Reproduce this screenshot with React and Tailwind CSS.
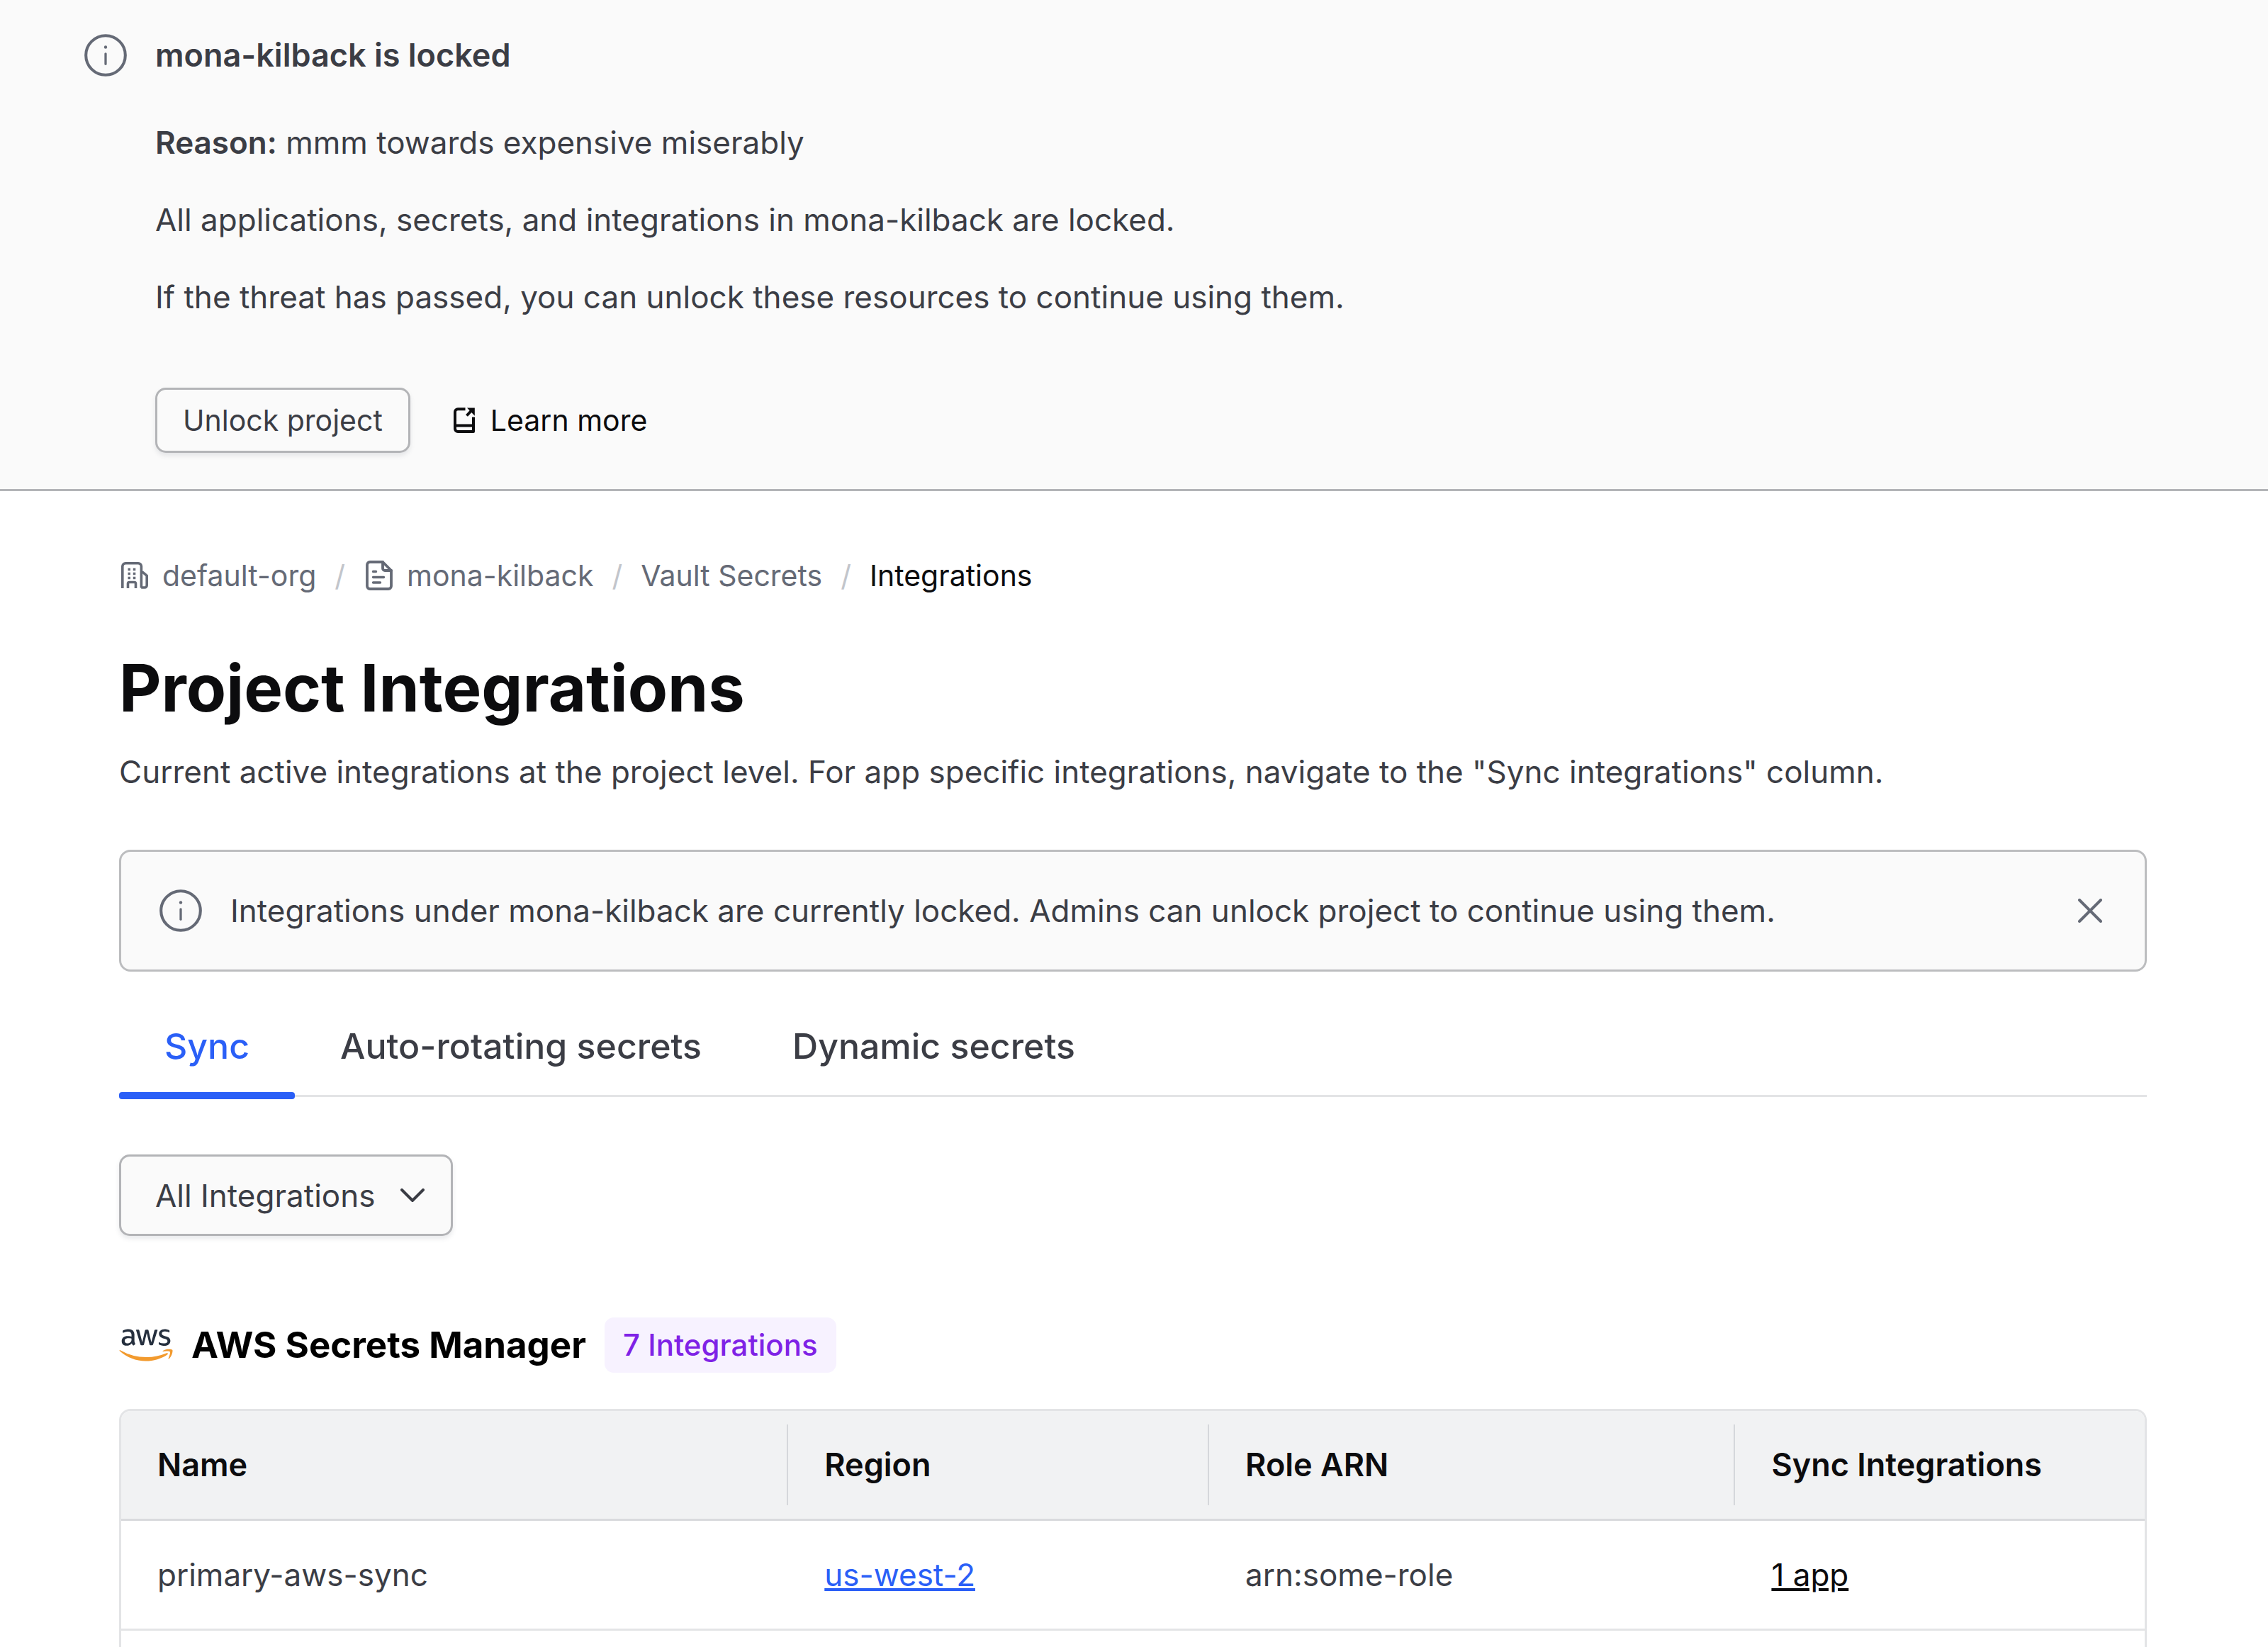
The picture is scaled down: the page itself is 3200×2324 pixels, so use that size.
import React from "react";
import { FaAws } from "react-icons/fa";

const tabs = ["Sync", "Auto-rotating secrets", "Dynamic secrets"];

const columns = [
  { label: "Name", width: "w-[32.9%]" },
  { label: "Region", width: "w-[20.8%]" },
  { label: "Role ARN", width: "w-[26%]" },
  { label: "Sync Integrations", width: "w-[20.3%]" },
];

function InfoIcon() {
  return (
    <svg viewBox="0 0 22 22" className="size-[60px] shrink-0 text-[#656a76]" fill="none" stroke="currentColor" aria-hidden="true">
      <circle cx="11" cy="11" r="10.2" strokeWidth="1.5" />
      <path d="M11 10.2v5.3" strokeWidth="1.2" strokeLinecap="round" />
      <circle cx="11" cy="6.8" r=".8" fill="currentColor" stroke="none" />
    </svg>
  );
}

function DocsLinkIcon() {
  return (
    <svg viewBox="0 0 30 36" className="h-9 w-[30px] shrink-0" fill="none" stroke="currentColor" strokeWidth="4" aria-hidden="true">
      <path d="M16.5 2.2H6A4 4 0 0 0 2 6.200V30a4 4 0 0 0 4 4h22V13.500" strokeLinejoin="round" />
      <path d="M2 25.500h26" />
      <path d="M18.500 11.500 25 4.500" />
      <path d="M19 .4h10.800v11.400Z" fill="currentColor" stroke="none" />
    </svg>
  );
}

function OrgIcon() {
  return (
    <span className="flex w-[43px] shrink-0 justify-center">
      <svg viewBox="0 0 38 38" className="size-[38px]" fill="none" stroke="currentColor" strokeWidth="3.600" aria-hidden="true">
        <path d="M1.800 37V6a4.400 4.400 0 0 1 4.300-4.200h18A4.400 4.400 0 0 1 28.400 6v30.400" />
        <path d="M9.500 37v-6.500a2 2 0 0 1 2-2h7a2 2 0 0 1 2 2V37" />
        <path d="M28.400 14.500h2.200l5.600 4.800V33a3 3 0 0 1-3 3h-5" strokeLinejoin="round" />
        <path d="M9.500 10.500h3.500M16.800 10.500h3.500M9.500 16.500h3.500M16.800 16.500h3.500M9.500 22.500h3.500M16.800 22.500h3.500" />
      </svg>
    </span>
  );
}

function ProjectIcon() {
  return (
    <span className="flex w-[43px] shrink-0 justify-center">
      <svg viewBox="0 0 38 42" className="h-[42px] w-[38px]" fill="none" stroke="currentColor" strokeWidth="3.800" strokeLinecap="round" strokeLinejoin="round" aria-hidden="true">
        <path d="M24 2H6a4 4 0 0 0-4 4v30a4 4 0 0 0 4 4h26a4 4 0 0 0 4-4V14L24 2Z" />
        <path d="M24 2v9a3 3 0 0 0 3 3h9" />
        <path d="M10.500 15.500h4M10.500 23.500h15M10.500 31h10" strokeWidth="3.400" />
      </svg>
    </span>
  );
}

function Separator() {
  return <span aria-hidden="true" className="text-[#c2c5cb]">/</span>;
}

function AwsLogo() {
  return (
    <>
      <svg width="0" height="0" className="absolute" aria-hidden="true">
        <linearGradient id="aws-fill" x1="0" y1="0" x2="0" y2="1">
          <stop offset="0.58" stopColor="#252f3e" />
          <stop offset="0.58" stopColor="#f29a2e" />
        </linearGradient>
      </svg>
      <FaAws fill="url(#aws-fill)" className="h-[60px] w-[76px] shrink-0" aria-hidden="true" />
    </>
  );
}

export default function App() {
  return (
    <div className="flex min-h-screen flex-col bg-white font-['Inter','Liberation_Sans',sans-serif] text-[44px] leading-[60px] text-[#3b3d45]">
      <section className="flex gap-10 border-b-[3px] border-[#b3b4b7] bg-[#fafafa] pt-12 pr-[120px] pb-[51px] pl-[119px]">
        <InfoIcon />
        <div>
          <h2 className="text-[45px] font-semibold">mona-kilback is locked</h2>
          <div className="mt-[63px] flex flex-col gap-[49px]">
            <p><strong className="font-semibold">Reason:</strong> mmm towards expensive miserably</p>
            <p>All applications, secrets, and integrations in mona-kilback are locked.</p>
            <p>If the threat has passed, you can unlock these resources to continue using them.</p>
          </div>
          <div className="mt-[98px] flex items-center gap-[61px] text-[41px]">
            <button type="button" className="h-[92px] rounded-[15px] border-[3px] border-[#b3b4b7] bg-[#fafafa] px-9 shadow-[0_4px_6px_rgba(101,106,118,0.14)]">Unlock project</button>
            <a href="#learn" className="flex items-center gap-[22px] text-[#0c0c0e]">
              <DocsLinkIcon />
              Learn more
            </a>
          </div>
        </div>
      </section>

      <main className="flex flex-1 flex-col pt-[89px] pr-[171px] pl-[168px]">
        <nav aria-label="Breadcrumb" className="flex items-center gap-[26px] text-[41px] text-[#656a76]">
          <a href="#org" className="flex items-center gap-[18px]"><OrgIcon />default-org</a>
          <Separator />
          <a href="#project" className="flex items-center gap-[18px]"><ProjectIcon />mona-kilback</a>
          <Separator />
          <a href="#vault">Vault Secrets</a>
          <Separator />
          <span aria-current="page" className="text-[#0c0c0e]">Integrations</span>
        </nav>

        <h1 className="mt-[69px] text-[92px] leading-[120px] font-bold text-[#0c0c0e]">Project Integrations</h1>
        <p className="mt-7">Current active integrations at the project level. For app specific integrations, navigate to the "Sync integrations" column.</p>

        <div role="status" className="mt-[80px] flex h-[172px] items-center gap-10 rounded-[16px] border-[3px] border-[#bcbdbf] bg-[#fafafa] pr-[60px] pl-[54px]">
          <InfoIcon />
          <p className="flex-1">Integrations under mona-kilback are currently locked. Admins can unlock project to continue using them.</p>
          <button type="button" aria-label="Dismiss" className="text-[#656a76]">
            <svg viewBox="0 0 34 34" className="size-[34px]" fill="none" stroke="currentColor" strokeWidth="4" strokeLinecap="round" aria-hidden="true">
              <path d="m2 2 30 30M32 2 2 32" />
            </svg>
          </button>
        </div>

        <div role="tablist" className="flex border-b-[3px] border-[#e3e4e6] text-[50px] font-medium">
          {tabs.map((tab, i) => (
            <button
              key={tab}
              type="button"
              role="tab"
              aria-selected={i === 0}
              className={i === 0 ? "relative px-16 pt-[75px] pb-[39px] text-[#2a5ff7]" : "px-16 pt-[75px] pb-[39px]"}
            >
              {tab}
              {i === 0 && <span className="absolute inset-x-0 -bottom-[6px] h-[10px] rounded-[4px] bg-[#2a5ff7]" />}
            </button>
          ))}
        </div>

        <div className="relative mt-[81px] w-[471px]">
          <select aria-label="Filter integrations" defaultValue="all" className="h-[115px] w-full appearance-none rounded-[15px] border-[3px] border-[#b3b4b7] bg-[#fafafa] pl-12 shadow-[0_4px_6px_rgba(101,106,118,0.14)]">
            <option value="all">All Integrations</option>
          </select>
          <svg viewBox="0 0 34 20" className="pointer-events-none absolute top-12 right-10 h-5 w-[34px]" fill="none" stroke="currentColor" strokeWidth="4" strokeLinecap="round" strokeLinejoin="round" aria-hidden="true">
            <path d="m2 2 15 15L32 2" />
          </svg>
        </div>

        <div className="mt-[115px] flex items-center gap-[26px]">
          <AwsLogo />
          <h2 className="text-[51px] font-bold text-[#000000]">AWS Secrets Manager</h2>
          <span className="flex h-[78px] items-center rounded-[13px] bg-[#f7f2ff] px-[26px] text-[42px] font-medium text-[#7f22e6]">7 Integrations</span>
        </div>

        <div className="mt-[51px] flex-1 overflow-hidden rounded-t-[16px] border-[3px] border-b-0 border-[#e3e4e6]">
          <table className="w-full table-fixed border-collapse text-left">
            <thead>
              <tr className="border-b-[3px] border-[#d9dadd] bg-[#f1f2f3] text-[45px] text-[#0c0c0e]">
                {columns.map((col, i) => (
                  <th key={col.label} scope="col" className={`${col.width} px-0 py-[19px] font-semibold`}>
                    <div className={i === 0 ? "py-[27px] pl-[51px]" : "border-l-2 border-[#d5d7db] py-[27px] pl-[51px]"}>{col.label}</div>
                  </th>
                ))}
              </tr>
            </thead>
            <tbody>
              <tr className="border-b-[3px] border-[#e3e4e6]">
                <td className="py-[46px] pl-[51px]">primary-aws-sync</td>
                <td className="py-[46px] pl-[53px]"><a href="#region" className="text-[#2a5ff7] underline">us-west-2</a></td>
                <td className="py-[46px] pl-[53px]">arn:some-role</td>
                <td className="py-[46px] pl-[53px]"><a href="#apps" className="text-[#0c0c0e] underline">1 app</a></td>
              </tr>
            </tbody>
          </table>
        </div>
      </main>
    </div>
  );
}
